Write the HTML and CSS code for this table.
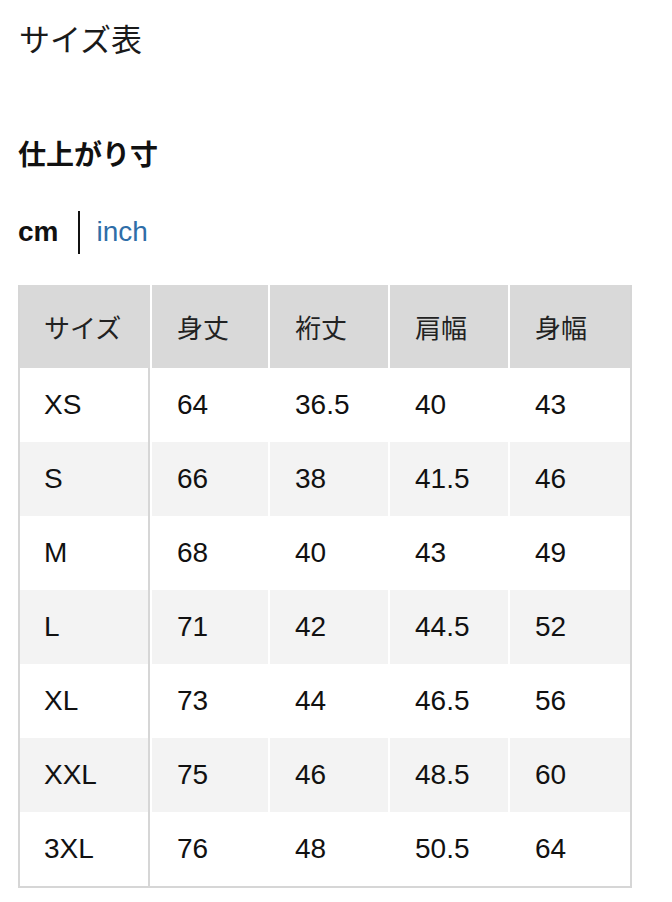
FILE: index.html
```html
<!DOCTYPE html>
<html lang="ja">
<head>
<meta charset="utf-8">
<title>サイズ表</title>
<link rel="stylesheet" href="styles.css">
</head>
<body>
<main class="page">
  <h1 class="title">サイズ表</h1>
  <h2 class="subtitle">仕上がり寸</h2>
  <div class="units">
    <span class="unit unit-active">cm</span>
    <span class="unit-sep"></span>
    <span class="unit unit-link">inch</span>
  </div>
  <table class="size-table">
    <colgroup>
      <col class="c-size">
      <col class="c-2">
      <col class="c-3">
      <col class="c-4">
      <col class="c-5">
    </colgroup>
    <thead>
      <tr>
        <th class="col-size">サイズ</th>
        <th>身丈</th>
        <th>裄丈</th>
        <th>肩幅</th>
        <th>身幅</th>
      </tr>
    </thead>
    <tbody>
      <tr><td class="col-size">XS</td><td>64</td><td>36.5</td><td>40</td><td>43</td></tr>
      <tr><td class="col-size">S</td><td>66</td><td>38</td><td>41.5</td><td>46</td></tr>
      <tr><td class="col-size">M</td><td>68</td><td>40</td><td>43</td><td>49</td></tr>
      <tr><td class="col-size">L</td><td>71</td><td>42</td><td>44.5</td><td>52</td></tr>
      <tr><td class="col-size">XL</td><td>73</td><td>44</td><td>46.5</td><td>56</td></tr>
      <tr><td class="col-size">XXL</td><td>75</td><td>46</td><td>48.5</td><td>60</td></tr>
      <tr><td class="col-size">3XL</td><td>76</td><td>48</td><td>50.5</td><td>64</td></tr>
    </tbody>
  </table>
</main>
</body>
</html>
```
FILE: styles.css
```css
html, body {
  margin: 0;
  padding: 0;
  background: #fff;
}

body {
  font-family: "Liberation Sans", "Noto Sans CJK JP", sans-serif;
  color: #1a1a1a;
}

.page {
  padding: 0 40px 0 18px;
}

.title {
  margin: 18px 0 0 1px;
  font-family: "Noto Sans CJK JP", sans-serif;
  font-size: 31px;
  font-weight: 400;
  line-height: 40px;
  color: #1a1a1a;
}

.subtitle {
  margin: 75px 0 0 0;
  font-family: "Noto Sans CJK JP", sans-serif;
  font-size: 28px;
  font-weight: 700;
  line-height: 40px;
  color: #111;
}

.units {
  display: flex;
  align-items: center;
  height: 44px;
  margin-top: 37px;
}

.unit {
  font-size: 28px;
  line-height: 44px;
}

.unit-active {
  font-weight: 700;
  color: #111;
}

.unit-sep {
  width: 2px;
  height: 43px;
  background: #111;
  margin: 0 16px 0 20px;
}

.unit-link {
  color: #2f6ea8;
}

.size-table {
  margin-top: 31px;
  width: 614px;
  border-collapse: separate;
  border-spacing: 0;
  table-layout: fixed;
  border: 2px solid #d6d6d6;
  border-top: none;
}

.c-size { width: 130px; }
.c-2 { width: 118px; }
.c-3 { width: 120px; }
.c-4 { width: 120px; }
.c-5 { width: 122px; }

.size-table th,
.size-table td {
  text-align: left;
  vertical-align: middle;
  padding: 0 0 0 25px;
  border-left: 2px solid #fff;
}

.size-table th {
  height: 83px;
  background: #d9d9d9;
  font-family: "Noto Sans CJK JP", sans-serif;
  font-size: 26px;
  font-weight: 400;
  color: #222;
}

.size-table td {
  height: 74px;
  font-size: 28px;
  color: #111;
}

.size-table th.col-size,
.size-table td.col-size {
  border-left: none;
  padding-left: 24px;
}

.size-table td.col-size {
  border-right: 2px solid #d6d6d6;
}

.size-table th.col-size {
  border-right: 2px solid #d9d9d9;
}

.size-table tbody tr:nth-child(even) td {
  background: #f3f3f3;
}

.size-table tbody tr:nth-child(odd) td {
  background: #fff;
}
```
